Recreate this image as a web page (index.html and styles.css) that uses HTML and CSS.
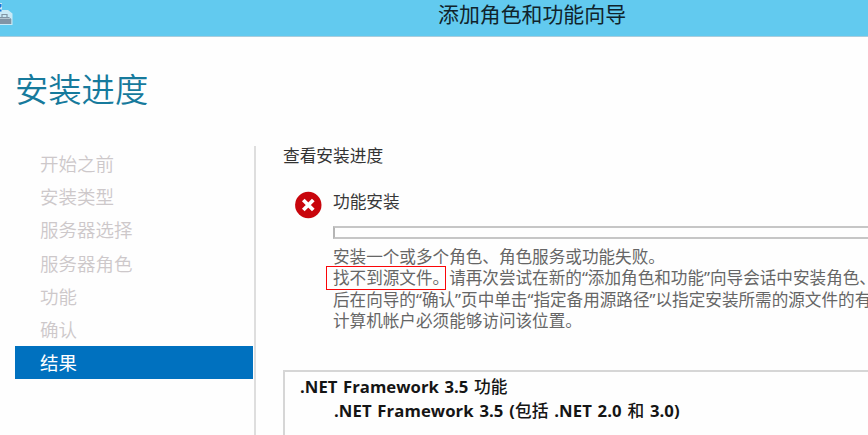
FILE: index.html
```html
<!DOCTYPE html>
<html lang="zh-CN">
<head>
<meta charset="utf-8">
<title>添加角色和功能向导</title>
<link rel="stylesheet" href="styles.css">
</head>
<body>
<header class="titlebar">
  <svg class="app-icon" width="14" height="26" viewBox="0 0 14 26">
    <path d="M0 3h2v7h6l4.500 3.500V25H0z" fill="#c9e9f6"/>
    <path d="M0 4h1.500v2.500L0 8zM0 9.500h1.500v2H0z" fill="#1674d8"/>
    <path d="M2 17v-2.500h5V17" fill="none" stroke="#8496a5" stroke-width="1.200"/>
    <path d="M0 17h9l2.300 2v5H0z" fill="#8194a5"/>
    <path d="M0 18.500h10" stroke="#b3c4cf" stroke-width="1"/>
  </svg>
  <span class="titlebar-text">添加角色和功能向导</span>
</header>
<h1 class="heading">安装进度</h1>
<div class="body">
  <nav class="steps">
    <div class="step">开始之前</div>
    <div class="step">安装类型</div>
    <div class="step">服务器选择</div>
    <div class="step">服务器角色</div>
    <div class="step">功能</div>
    <div class="step">确认</div>
    <div class="step active">结果</div>
  </nav>
  <main class="content">
    <h2 class="subheading">查看安装进度</h2>
    <section class="status">
      <svg class="error-icon" width="28" height="28" viewBox="0 0 28 28">
        <circle cx="14.300" cy="14" r="13.200" fill="#c8050c"/>
        <path d="M9.300 9l10 10M19.300 9l-10 10" stroke="#fff" stroke-width="3.800"/>
      </svg>
      <div class="status-main">
        <div class="status-title">功能安装</div>
        <div class="progress"></div>
        <div class="message">
          <div>安装一个或多个角色、角色服务或功能失败。</div>
          <div><span class="marked">找不到源文件。</span>请再次尝试在新的“添加角色和功能”向导会话中安装角色、</div>
          <div>后在向导的“确认”页中单击“指定备用源路径”以指定安装所需的源文件的有</div>
          <div>计算机帐户必须能够访问该位置。</div>
        </div>
      </div>
    </section>
    <section class="results">
      <div class="feature">.NET Framework 3.5 <span class="han">功能</span></div>
      <div class="feature child">.NET Framework 3.5 (<span class="han">包括</span> .NET 2.0 <span class="han">和</span> 3.0)</div>
    </section>
  </main>
</div>
</body>
</html>
```
FILE: styles.css
```css
*,
*::after { box-sizing: border-box; }

body {
  margin: 0;
  width: 868px;
  height: 435px;
  overflow: hidden;
  display: flex;
  flex-direction: column;
  background: #fefefe;
  font-family: "Noto Sans", "Noto Sans CJK SC", sans-serif;
  white-space: nowrap;
}

.titlebar {
  flex: none;
  display: flex;
  align-items: flex-start;
  height: 37px;
  background: #62caef;
  border-bottom: 1px solid #a9cddd;
}

.app-icon { flex: none; }

.titlebar-text {
  margin-left: 424px;
  font-size: 20.900px;
  line-height: 29px;
  color: #10232b;
}

.heading {
  flex: none;
  margin: 27px 0 0 15px;
  height: 82px;
  font-size: 33.300px;
  line-height: 50px;
  font-weight: 350;
  color: #167a9c;
}

.body {
  flex: 1;
  min-height: 0;
  display: flex;
}

.steps {
  flex: none;
  width: 256px;
  padding: 1px 1px 0 15px;
  border-right: 2px solid #dedede;
}

.step {
  height: 33.200px;
  padding-left: 25px;
  font-size: 18.500px;
  line-height: 33px;
  font-weight: 350;
  color: #cdc8ca;
}

.step.active {
  background: #0071bf;
  color: #fff;
  font-weight: 400;
}

.content {
  flex: 1;
  min-width: 0;
  display: flex;
  flex-direction: column;
  padding-left: 27px;
}

.subheading {
  margin: 0;
  font-size: 16.700px;
  line-height: 20px;
  font-weight: 400;
  color: #333;
}

.status {
  flex: none;
  display: flex;
  height: 204px;
  padding-top: 25px;
}

.error-icon {
  flex: none;
  margin: 0 11px 0 11px;
}

.status-main {
  flex: 1;
  min-width: 0;
}

.status-title {
  height: 35px;
  font-size: 16.700px;
  line-height: 21px;
  color: #383838;
}

.progress {
  height: 13px;
  border: 2px solid #c6c6c6;
  border-left-color: #b5b5b5;
  border-right: 0;
}

.message {
  padding-top: 7px;
  font-size: 16.600px;
  line-height: 21.400px;
  color: #666;
}

.marked { position: relative; }

.marked::after {
  content: "";
  position: absolute;
  left: -7px;
  top: 0;
  width: 120px;
  height: 24px;
  border: 1px solid #fb0508;
}

.results {
  flex: 1;
  min-height: 0;
  padding: 3px 0 0 15px;
  border: 2px solid #d6d6d6;
  border-width: 2px 0 0 2px;
}

.feature {
  font-family: "Open Sans", "Noto Sans CJK SC", sans-serif;
  font-size: 16.700px;
  line-height: 24px;
  font-weight: 700;
  letter-spacing: 0.030px;
  word-spacing: 1.200px;
  color: #151515;
}

.feature.child {
  padding-left: 34px;
  letter-spacing: 0.080px;
  word-spacing: 1.300px;
}

.han { font-weight: 500; }
```
